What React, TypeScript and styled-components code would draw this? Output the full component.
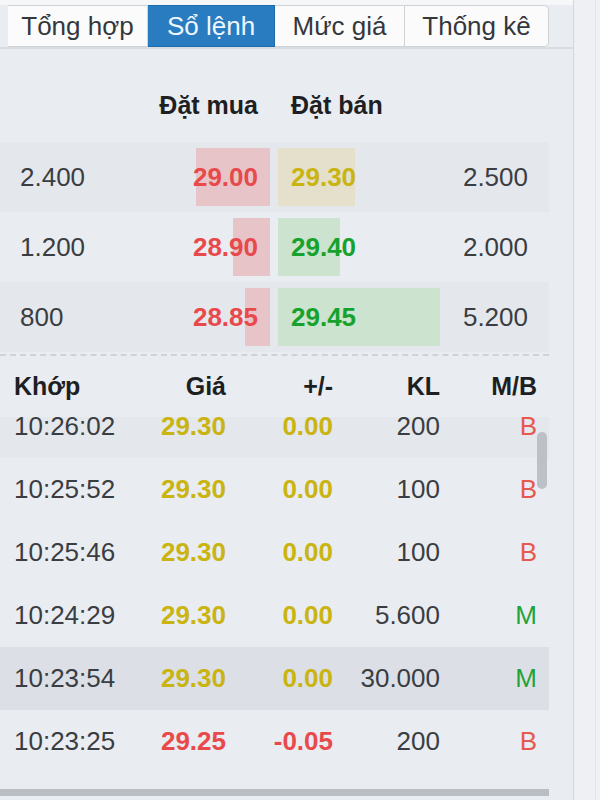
import React from 'react';
import styled, { createGlobalStyle } from 'styled-components';

const GlobalStyle = createGlobalStyle`
  html, body {
    margin: 0;
    padding: 0;
    background: #eef0f3;
  }
  body {
    font-family: "Liberation Sans", Arial, sans-serif;
    color: #3a3d42;
  }
`;

const Page = styled.div`
  display: flex;
  height: 800px;
  overflow: hidden;
`;

const Panel = styled.div`
  width: 573px;
  flex-shrink: 0;
  background: #e9ecf0;
  border-right: 1px solid #d3d7db;
  display: flex;
  flex-direction: column;
`;

const Gutter = styled.div`
  flex: 1;
  background: #eef0f3;
  border-right: 1px solid #e2e5e8;
  margin-right: 4px;
`;

// tabs
const TabBar = styled.div`
  display: flex;
  padding: 5px 0 0 8px;
  background: linear-gradient(#f6f7f9 0, #f6f7f9 5px, #e9ecf0 5px);
  border-bottom: 2px solid #d9dce0;
`;

const Tab = styled.div<{ $active?: boolean; $w: number; $last?: boolean }>`
  width: ${(p) => p.$w}px;
  height: 42px;
  display: flex;
  align-items: center;
  justify-content: center;
  font-size: 26px;
  box-sizing: border-box;
  background: ${(p) => (p.$active ? '#2a7cc0' : '#fbfbfc')};
  color: ${(p) => (p.$active ? '#eef7ff' : '#34373b')};
  border: 1px solid ${(p) => (p.$active ? '#1f6aa8' : '#cfd3d7')};
  border-left-width: 0;
  border-radius: ${(p) => (p.$last ? '0 5px 5px 0' : '0')};
`;

// order book
const BookHead = styled.div`
  display: grid;
  grid-template-columns: 270px 271px;
  column-gap: 8px;
  height: 93px;
  align-items: end;
  padding-bottom: 22px;
  box-sizing: border-box;
  font-weight: bold;
  font-size: 25px;
  color: #1e1f22;
`;

const HeadLeft = styled.div`
  text-align: right;
  padding-right: 12px;
`;

const HeadRight = styled.div`
  padding-left: 13px;
`;

const BookRow = styled.div<{ $shade?: boolean }>`
  width: 549px;
  height: 70px;
  display: grid;
  grid-template-columns: 270px 271px;
  column-gap: 8px;
  background: ${(p) => (p.$shade ? '#e4e7ec' : 'transparent')};
  font-size: 26px;
`;

const Side = styled.div<{ $buy?: boolean }>`
  position: relative;
  display: flex;
  align-items: center;
  justify-content: space-between;
  padding: ${(p) => (p.$buy ? '0 12px 0 20px' : '0 21px 0 13px')};
`;

const Bar = styled.div<{ $tone: string; $buy?: boolean }>`
  position: absolute;
  top: 6px;
  bottom: 6px;
  ${(p) => (p.$buy ? 'right: 0;' : 'left: 0;')}
  background: ${(p) => p.$tone};
`;

const Qty = styled.span`
  position: relative;
  color: #3a3d42;
`;

const Price = styled.span<{ $color: string }>`
  position: relative;
  font-weight: bold;
  color: ${(p) => p.$color};
`;

const Dashed = styled.div`
  width: 549px;
  border-top: 2px dashed #cfd3d8;
  margin-top: 2px;
`;

// trades
const tradeCols = `
  display: grid;
  grid-template-columns: 116px 96px 107px 107px 97px;
  padding: 0 12px 0 14px;
  width: 549px;
  box-sizing: border-box;
`;

const TradeHead = styled.div`
  ${tradeCols}
  height: 61px;
  align-items: center;
  font-weight: bold;
  font-size: 25px;
  color: #1e1f22;
  & > span:not(:first-child) {
    text-align: right;
  }
`;

const TradeScroll = styled.div`
  position: relative;
  height: 372px;
  overflow: hidden;
`;

const TradeList = styled.div`
  margin-top: -22px;
`;

const TradeRow = styled.div<{ $tone: number }>`
  ${tradeCols}
  height: 63px;
  align-items: center;
  font-size: 26px;
  background: ${(p) => (p.$tone === 2 ? '#dce0e6' : p.$tone === 1 ? '#e4e7ec' : 'transparent')};
  & > span:not(:first-child) {
    text-align: right;
  }
`;

const Cell = styled.span<{ $color?: string; $bold?: boolean }>`
  color: ${(p) => p.$color || '#3a3d42'};
  font-weight: ${(p) => (p.$bold ? 'bold' : 'normal')};
`;

const Thumb = styled.div`
  position: absolute;
  right: 26px;
  top: 15px;
  width: 10px;
  height: 57px;
  border-radius: 5px;
  background: #bcc1c7;
`;

const HScroll = styled.div`
  width: 549px;
  height: 7px;
  background: #b9bec4;
`;

const RED = '#e84a4c';
const YEL = '#c9b412';
const GRN = '#16a22c';

const book = [
  { bq: '2.400', bp: '29.00', bw: 74, sp: '29.30', sw: 77, sq: '2.500', sc: YEL, st: '#e4e0cb' },
  { bq: '1.200', bp: '28.90', bw: 37, sp: '29.40', sw: 62, sq: '2.000', sc: GRN, st: '#cbe3cf' },
  { bq: '800', bp: '28.85', bw: 25, sp: '29.45', sw: 162, sq: '5.200', sc: GRN, st: '#cbe3cf' },
];

const trades = [
  { t: '10:26:02', p: '29.30', c: '0.00', kl: '200', mb: 'B', tone: 1 },
  { t: '10:25:52', p: '29.30', c: '0.00', kl: '100', mb: 'B', tone: 0 },
  { t: '10:25:46', p: '29.30', c: '0.00', kl: '100', mb: 'B', tone: 0 },
  { t: '10:24:29', p: '29.30', c: '0.00', kl: '5.600', mb: 'M', tone: 0 },
  { t: '10:23:54', p: '29.30', c: '0.00', kl: '30.000', mb: 'M', tone: 2 },
  { t: '10:23:25', p: '29.25', c: '-0.05', kl: '200', mb: 'B', tone: 0 },
];

export default function App() {
  return (
    <Page>
      <GlobalStyle />
      <Panel>
        <TabBar>
          <Tab $w={140}>Tổng hợp</Tab>
          <Tab $w={127} $active>Sổ lệnh</Tab>
          <Tab $w={130}>Mức giá</Tab>
          <Tab $w={144} $last>Thống kê</Tab>
        </TabBar>

        <BookHead>
          <HeadLeft>Đặt mua</HeadLeft>
          <HeadRight>Đặt bán</HeadRight>
        </BookHead>

        {book.map((r, i) => (
          <BookRow key={i} $shade={i !== 1}>
            <Side $buy>
              <Bar $buy $tone="#e7c4c8" style={{ width: r.bw }} />
              <Qty>{r.bq}</Qty>
              <Price $color={RED}>{r.bp}</Price>
            </Side>
            <Side>
              <Bar $tone={r.st} style={{ width: r.sw }} />
              <Price $color={r.sc}>{r.sp}</Price>
              <Qty>{r.sq}</Qty>
            </Side>
          </BookRow>
        ))}
        <Dashed />

        <TradeHead>
          <span>Khớp</span>
          <span>Giá</span>
          <span>+/-</span>
          <span>KL</span>
          <span>M/B</span>
        </TradeHead>

        <TradeScroll>
          <TradeList>
            {trades.map((r, i) => {
              const col = r.c.startsWith('-') ? RED : YEL;
              return (
                <TradeRow key={i} $tone={r.tone}>
                  <Cell>{r.t}</Cell>
                  <Cell $bold $color={col}>{r.p}</Cell>
                  <Cell $bold $color={col}>{r.c}</Cell>
                  <Cell>{r.kl}</Cell>
                  <Cell $color={r.mb === 'M' ? '#1fa33a' : '#e5594f'}>{r.mb}</Cell>
                </TradeRow>
              );
            })}
          </TradeList>
          <Thumb />
        </TradeScroll>
        <HScroll />
      </Panel>
      <Gutter />
    </Page>
  );
}
